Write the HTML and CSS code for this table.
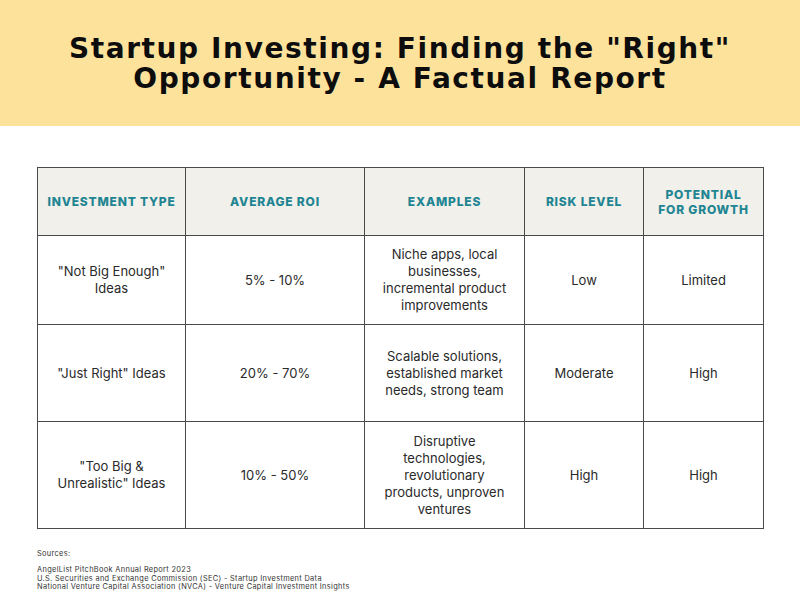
FILE: index.html
```html
<!DOCTYPE html>
<html>
<head>
<meta charset="utf-8">
<link rel="stylesheet" href="styles.css">
</head>
<body>
<header class="banner">
  <h1 class="title">Startup Investing: Finding the "Right"<br>Opportunity - A Factual Report</h1>
</header>
<main class="content">
  <table class="report">
    <colgroup>
      <col class="c1"><col class="c2"><col class="c3"><col class="c4"><col class="c5">
    </colgroup>
    <thead>
      <tr class="head">
        <th>INVESTMENT TYPE</th>
        <th>AVERAGE ROI</th>
        <th>EXAMPLES</th>
        <th>RISK LEVEL</th>
        <th>POTENTIAL<br>FOR GROWTH</th>
      </tr>
    </thead>
    <tbody>
      <tr class="r1">
        <td>"Not Big Enough"<br>Ideas</td>
        <td>5% - 10%</td>
        <td>Niche apps, local<br>businesses,<br>incremental product<br>improvements</td>
        <td>Low</td>
        <td>Limited</td>
      </tr>
      <tr class="r2">
        <td>"Just Right" Ideas</td>
        <td>20% - 70%</td>
        <td>Scalable solutions,<br>established market<br>needs, strong team</td>
        <td>Moderate</td>
        <td>High</td>
      </tr>
      <tr class="r3">
        <td>"Too Big &amp;<br>Unrealistic" Ideas</td>
        <td>10% - 50%</td>
        <td>Disruptive<br>technologies,<br>revolutionary<br>products, unproven<br>ventures</td>
        <td>High</td>
        <td>High</td>
      </tr>
    </tbody>
  </table>
  <footer class="sources">
    <p class="src-label">Sources:</p>
    <p class="src-list">AngelList PitchBook Annual Report 2023<br>U.S. Securities and Exchange Commission (SEC) - Startup Investment Data<br>National Venture Capital Association (NVCA) - Venture Capital Investment Insights</p>
  </footer>
</main>
</body>
</html>
```
FILE: styles.css
```css
html, body {
  margin: 0;
  padding: 0;
  background: #ffffff;
}
body {
  width: 800px;
  height: 600px;
  overflow: hidden;
  font-family: "Inter", "Liberation Sans", sans-serif;
  color: #222222;
}
.banner {
  height: 126px;
  background: #fde29c;
  display: flex;
  align-items: center;
  justify-content: center;
}
.title {
  margin: 0;
  text-align: center;
  font-family: "DejaVu Sans", "Liberation Sans", sans-serif;
  font-weight: 700;
  font-size: 28px;
  line-height: 30px;
  color: #0d0d0d;
  letter-spacing: 1.6px;
  padding-top: 1px;
}
.content {
  padding: 41px 37px 0 37px;
}
.report {
  border-collapse: collapse;
  width: 726px;
  table-layout: fixed;
}
.c1 { width: 148px; }
.c2 { width: 179px; }
.c3 { width: 160px; }
.c4 { width: 119px; }
.c5 { width: 120px; }
.report th, .report td {
  border: 1.3px solid #4a4a4a;
  text-align: center;
  vertical-align: middle;
  padding: 0;
}
.report th {
  background: #f1f0eb;
  color: #1f8592;
  font-weight: 800;
  font-size: 12px;
  line-height: 15px;
  letter-spacing: 0.8px;
}
.report td {
  font-size: 13px;
  line-height: 17px;
  color: #2a2a2a;
}
.head { height: 68px; }
.r1 { height: 89px; }
.r2 { height: 97px; }
.r3 { height: 107px; }
.sources {
  padding-top: 21px;
  font-size: 7.4px;
  line-height: 8.4px;
  letter-spacing: 0.33px;
  color: #333333;
}
.sources p {
  margin: 0;
}
.src-label {
  margin-bottom: 8px !important;
}
```
